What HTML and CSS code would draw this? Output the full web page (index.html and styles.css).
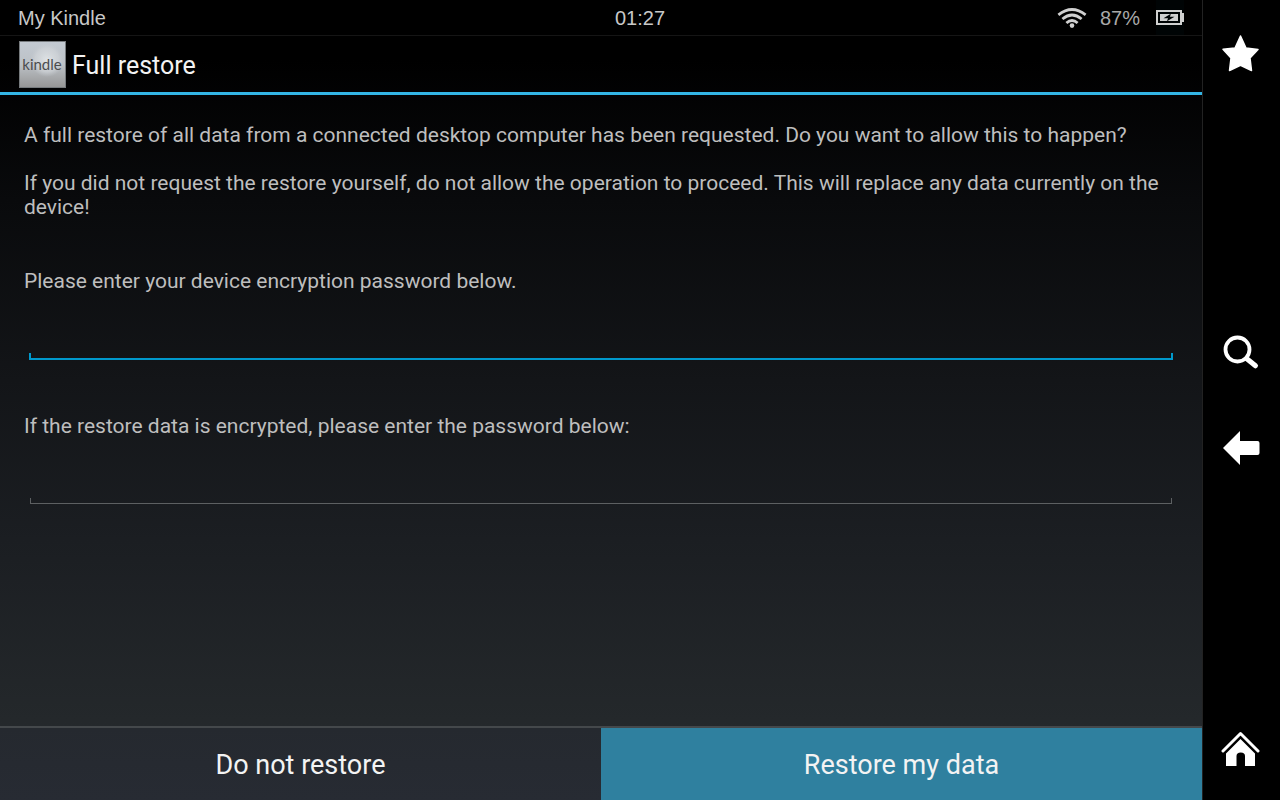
FILE: index.html
```html
<!DOCTYPE html>
<html lang="en">
<head>
<meta charset="utf-8">
<meta name="viewport" content="width=device-width, initial-scale=1">
<title>Full restore</title>
<link rel="stylesheet" href="styles.css">
</head>
<body>
<div class="screen">
  <header class="status-bar">
    <span class="device-name">My Kindle</span>
    <time class="clock">01:27</time>
    <div class="indicators">
      <svg class="wifi" viewBox="0 0 30 20" width="30" height="20" aria-label="Wi-Fi">
        <g fill="none" stroke="#d0d0d0" stroke-width="2.8">
          <path d="M1.4 6.8 Q15 -3.8 28.6 6.8"/>
          <path d="M5.4 11 Q15 3 24.6 11"/>
          <path d="M9.4 15 Q15 10 20.6 15"/>
        </g>
        <circle cx="15" cy="17.6" r="2.3" fill="#d0d0d0"/>
      </svg>
      <span class="battery-level">87%</span>
      <span class="battery">
        <svg viewBox="0 0 28 15" width="28" height="15" aria-label="Charging">
          <path fill="#d0d0d0" fill-rule="evenodd" d="M0 0H26V3H28V12H26V15H0ZM2 2V13H24V2Z"/>
          <path fill="#d0d0d0" d="M4 4H22V11H4Z"/>
          <path fill="#000405" d="M14.8 3.8 L7.5 8.2 H12 L11 11.2 L18.5 6.8 H14 Z"/>
        </svg>
      </span>
    </div>
  </header>

  <div class="title-bar">
    <svg class="app-icon" viewBox="0 0 47 47" width="47" height="47" aria-hidden="true">
      <defs>
        <linearGradient id="plate" x1="0" y1="0" x2="0" y2="1">
          <stop offset="0" stop-color="#c3cad2"/>
          <stop offset=".5" stop-color="#bcc1c6"/>
          <stop offset="1" stop-color="#979797"/>
        </linearGradient>
        <radialGradient id="glow">
          <stop offset="0" stop-color="#dfe3e6"/>
          <stop offset=".7" stop-color="#d0d4d8" stop-opacity=".7"/>
          <stop offset="1" stop-color="#c4c9ce" stop-opacity="0"/>
        </radialGradient>
      </defs>
      <rect width="47" height="47" fill="#777b7e"/>
      <rect x="1" y="1" width="45" height="45" fill="url(#plate)"/>
      <circle cx="28" cy="19" r="17" fill="url(#glow)"/>
      <text class="app-icon-text" x="23" y="29" text-anchor="middle">kindle</text>
    </svg>
    <h1 class="title">Full restore</h1>
  </div>

  <main class="content">
    <p class="message">A full restore of all data from a connected desktop computer has been requested. Do you want to allow this to happen?</p>
    <p class="message">If you did not request the restore yourself, do not allow the operation to proceed. This will replace any data currently on the device!</p>
    <form class="passwords" id="restore">
      <div class="field">
        <label for="device-password">Please enter your device encryption password below.</label>
        <input class="password active" id="device-password" type="password">
      </div>
      <div class="field">
        <label for="data-password">If the restore data is encrypted, please enter the password below:</label>
        <input class="password" id="data-password" type="password">
      </div>
    </form>
  </main>

  <footer class="actions">
    <button class="action" type="button">Do not restore</button>
    <button class="action primary" type="submit" form="restore">Restore my data</button>
  </footer>
</div>

<nav class="side-bar" aria-label="System">
  <button class="nav-button" type="button" aria-label="Favourites">
    <svg viewBox="0 0 40 40" width="40" height="40"><path fill="#fff" stroke="#fff" stroke-width="1.5" stroke-linejoin="round" d="M20.5 3 L26 15 L38 16.5 L30 25 L31.5 37.5 L20.5 32.2 L9.5 37.5 L11 25 L3 16.2 L15 15 Z"/></svg>
  </button>
  <div class="nav-group">
    <button class="nav-button" type="button" aria-label="Search">
      <svg viewBox="0 0 40 40" width="40" height="40"><circle cx="17.5" cy="17.5" r="12" fill="none" stroke="#fff" stroke-width="3.8"/><path d="M26.5 26.5 L35.5 33.8" stroke="#fff" stroke-width="5" stroke-linecap="round"/></svg>
    </button>
    <button class="nav-button" type="button" aria-label="Back">
      <svg viewBox="0 0 40 40" width="40" height="40"><path fill="#fff" d="M3 20 L20 3 V13 H37.5 Q39.5 13 39.5 15 V25 Q39.5 27 37.5 27 H20 V37 Z"/></svg>
    </button>
  </div>
  <button class="nav-button" type="button" aria-label="Home">
    <svg viewBox="0 0 40 40" width="40" height="40"><path fill="none" stroke="#fff" stroke-width="3" stroke-linecap="round" stroke-linejoin="round" d="M3 22 L20.5 4.5 L38 22"/><path fill="#fff" d="M6 37 V24.5 L20.5 10 L35 24.5 V37 H25 V27 Q25 23.5 20.8 23.5 Q16.5 23.5 16.5 27 V37 Z"/></svg>
  </button>
</nav>
</body>
</html>
```
FILE: styles.css
```css
* {
  box-sizing: border-box;
}

body {
  margin: 0;
  min-height: 100vh;
  display: grid;
  grid-template-columns: 1fr 78px;
  background: #000;
  color: #bebebe;
  font-family: Roboto, "Noto Sans", sans-serif;
}

.screen {
  display: flex;
  flex-direction: column;
  background: linear-gradient(#000 60px, #090a0c 200px, #131518 380px, #1b1e22 540px, #24282b 720px, #272b33 800px);
}

.status-bar {
  display: grid;
  grid-template-columns: 1fr auto 1fr;
  align-items: center;
  height: 36px;
  padding: 0 18px;
  border-bottom: 1px solid #151515;
  background: #000;
  color: #c8c8c8;
  font-family: "Liberation Sans", Arial, sans-serif;
  font-size: 20px;
}

.device-name,
.clock,
.battery-level {
  padding-top: 2px;
}

.clock {
  padding-left: 78px;
}

.indicators {
  display: flex;
  justify-content: flex-end;
  align-items: center;
}

.wifi,
.battery svg {
  display: block;
}

.battery-level {
  margin: 0 16px 0 13px;
  color: #a8a8a8;
}

.battery {
  display: flex;
  align-items: center;
  height: 35px;
  background: #000405;
}

.title-bar {
  display: flex;
  align-items: center;
  gap: 6px;
  height: 59px;
  padding-left: 19px;
  border-bottom: 3px solid #33b5e5;
}

.app-icon-text {
  fill: #4b4d4f;
  font-family: Lato, sans-serif;
  font-size: 15px;
}

.title {
  margin: 0;
  padding-top: 2px;
  color: #f3f3f3;
  font-size: 25px;
  font-weight: 400;
}

.content {
  flex: 1;
  padding: 28px 24px 24px;
  font-size: 21px;
  line-height: 24px;
}

.message {
  margin: 0 0 24px;
}

.passwords {
  margin-top: 50px;
}

.field {
  display: flex;
  flex-direction: column;
  gap: 12px;
  margin-bottom: 49px;
}

.password {
  height: 60px;
  margin: 0 5px;
  padding: 0 8px;
  border: 0;
  outline: 0;
  color: #fff;
  font: inherit;
  background:
    linear-gradient(#5d6062, #5d6062) 1px 53px / calc(100% - 2px) 1px no-repeat,
    linear-gradient(#5d6062, #5d6062) 1px 48px / 1px 5px no-repeat,
    linear-gradient(#5d6062, #5d6062) calc(100% - 1px) 48px / 1px 5px no-repeat;
}

.password.active {
  background:
    linear-gradient(#0099cc, #0099cc) 0 53px / 100% 2px no-repeat,
    linear-gradient(#0099cc, #0099cc) 0 48px / 2px 5px no-repeat,
    linear-gradient(#0099cc, #0099cc) 100% 48px / 2px 5px no-repeat;
}

.actions {
  display: grid;
  grid-template-columns: 1fr 1fr;
  height: 74px;
  border-top: 2px solid #44484b;
}

.action {
  padding: 2px 0 0;
  border: 0;
  background: linear-gradient(#25292f, #272b33);
  color: #f3f3f3;
  font: 27px Roboto, "Noto Sans", sans-serif;
}

.action.primary {
  background: #2f809f;
}

.side-bar {
  display: flex;
  flex-direction: column;
  justify-content: space-between;
  align-items: center;
  padding: 33px 4px 31px 0;
  border-left: 1px solid #222;
  background: #000;
}

.nav-group {
  display: flex;
  flex-direction: column;
  gap: 56px;
  margin-bottom: 2px;
}

.nav-button {
  display: block;
  padding: 0;
  border: 0;
  background: none;
}

.nav-button svg {
  display: block;
}
```
